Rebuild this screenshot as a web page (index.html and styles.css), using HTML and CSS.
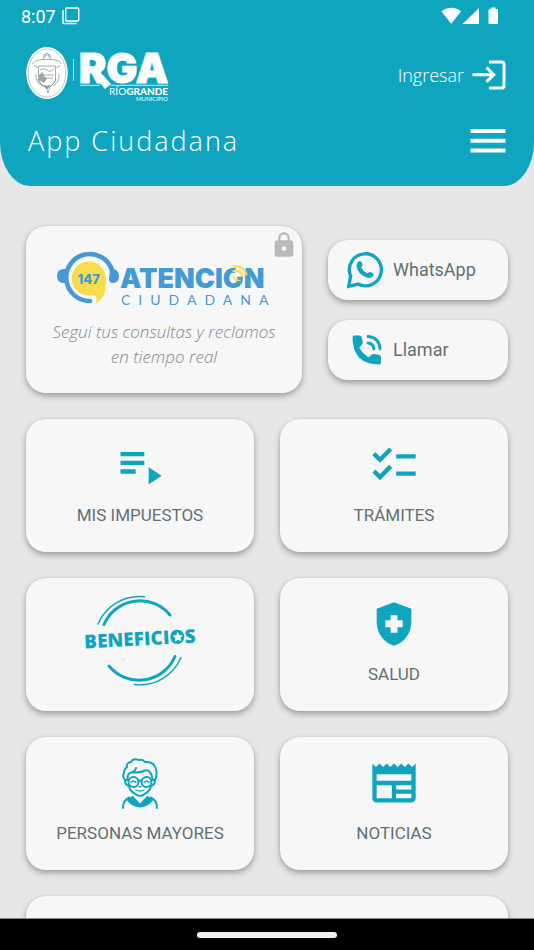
FILE: index.html
```
<!DOCTYPE html>
<html lang="es">
<head>
  <meta charset="UTF-8">
  <meta name="viewport" content="width=device-width, initial-scale=1.0">
  <title>App Ciudadana</title>
  <link rel="stylesheet" href="styles.css">
</head>
<body>

  <header class="header">
    <div class="status-bar">
      <span class="clock">8:07</span>
      <svg class="status-copy" width="18" height="18" viewBox="0 0 18 18" fill="none" stroke="currentColor" stroke-width="1.4">
        <rect x="3.7" y="1" width="13" height="13" rx="1"/>
        <path d="M1 3v12.5a1 1 0 0 0 1 1h12.5"/>
      </svg>
      <svg class="status-icons" width="58" height="18" viewBox="0 0 58 18" fill="currentColor">
        <path d="M0.500 4.500C6-.4 14.500-.4 20 4.500L10.200 16.800z"/>
        <path d="M38 1v16H21.500z"/>
        <path d="M50 .5h4.500V2H56a1 1 0 0 1 1 1v13a1 1 0 0 1-1 1h-7.500a1 1 0 0 1-1-1V3a1 1 0 0 1 1-1H50z"/>
      </svg>
    </div>

    <div class="brand-row">
      <svg class="logo" width="143" height="57" viewBox="0 0 143 57" role="img" aria-label="RGA Río Grande Municipio">
        <!-- escudo -->
        <ellipse cx="21" cy="27" rx="20.800" ry="26" fill="#fff"/>
        <ellipse cx="21" cy="27" rx="18.800" ry="24" fill="none" stroke="#9aa5a7" stroke-width=".6"/>
        <g fill="none" stroke="#7d8b8e" stroke-width=".7">
          <path d="M12.500 20h17v14q-1 5-8.500 7-7.500-2-8.500-7z"/>
          <path d="M6 18q3-4 9-4.500h12q6 .5 9 4.500M8 19q1 3 4 2M34 19q-1 3-4 2M17 13q0-5 4-6 4 1 4 6M19 12V9h4v3"/>
          <path d="M14 24q4-3 7 0t7-1M16 29h12M18 32h9M12 33q3 7 9 10 6-3 9-10M10 28q-1 8 6 12M33 28q1 8-6 12M20 41l2 6 2-6"/>
        </g>
        <path d="M13 29l3-3 2 4 3 3-3 4-5-3zM17 38l4 2 4-2-4 5z" fill="#6b7a7d" opacity=".65"/>
        <path d="M47.500 13v22" stroke="#fff" stroke-width=".8" opacity=".8"/>
        <!-- RGA -->
        <text class="logo-rga" x="53" y="36.500">RGA</text>
        <path d="M69 31l8-2 8 9-6 5z" fill="#fff"/>
        <path d="M54 39.300h20M84 39.300h58" stroke="#fff" stroke-width=".8"/>
        <text class="logo-rio" x="142" y="49" text-anchor="end">RÍO<tspan class="logo-grande">GRANDE</tspan></text>
        <text class="logo-municipio" x="142" y="54.500" text-anchor="end">MUNICIPIO</text>
      </svg>

      <a class="login" href="#ingresar">
        <span>Ingresar</span>
        <svg width="34" height="30" viewBox="0 0 34 30" fill="none" stroke="currentColor" stroke-width="3">
          <path d="M17 2h12.500a2.500 2.500 0 0 1 2.500 2.500v21a2.500 2.500 0 0 1-2.500 2.500H17"/>
          <path d="M.5 14.700H21M14.500 7.500l7.200 7.200-7.200 7.200"/>
        </svg>
      </a>
    </div>

    <div class="title-row">
      <h1>App Ciudadana</h1>
      <button class="menu-btn" type="button" aria-label="Menú">
        <svg width="36" height="26" viewBox="0 0 36 26" fill="currentColor">
          <path d="M.5 1h35v4H.5zM.5 10.800h35v4H.5zM.5 20.600h35v4H.5z"/>
        </svg>
      </button>
    </div>
  </header>

  <main class="content">
    <section class="top-row">
      <a class="card atencion" href="#atencion">
        <svg class="lock" width="28" height="28" viewBox="0 0 24 24" fill="#b9b9b9">
          <path d="M18 8h-1V6c0-2.760-2.240-5-5-5S7 3.240 7 6v2H6c-1.100 0-2 .9-2 2v10c0 1.100.9 2 2 2h12c1.100 0 2-.9 2-2V10c0-1.100-.9-2-2-2zm-6 9c-1.100 0-2-.9-2-2s.9-2 2-2 2 .9 2 2-.9 2-2 2zm3.100-9H8.900V6c0-1.710 1.390-3.100 3.100-3.100s3.100 1.390 3.100 3.100v2z"/>
        </svg>
        <svg class="atencion-logo" width="214" height="56" viewBox="0 0 214 56" role="img" aria-label="147 Atención Ciudadana">
          <path d="M55 19A23.500 23.500 0 1 0 33 50" fill="none" stroke="#459ad6" stroke-width="4.600" stroke-linecap="round"/>
          <path d="M9 18v14Q0 33 0 25t9-7zM53 17q9 1 9 8t-6 7q-4 0-4-4z" fill="#459ad6"/>
          <path d="M48.700 27.500A17 17 0 1 0 31.500 44.500L36 44.300Q41.500 45 38.800 52.500Q48.500 46.500 48.700 35z" fill="#f7dd4b"/>
          <text class="num" x="31.700" y="33" text-anchor="middle">147</text>
          <text class="atencion-word" x="63" y="36.600">ATENCION</text>
          <path d="M178 24l1-8h10l-2 9-5 1z" fill="#f7f7f7"/>
          <g fill="none" stroke="#f7dd4b" stroke-width="2.200" stroke-linecap="round">
            <path d="M176.500 15.500q10-1.500 13 8M176.500 20q7-1 9 5"/>
            <path d="M177 25q0 5 6 4.500" stroke-width="1.500"/>
          </g>
          <text class="ciudadana-word" x="64" y="54">CIUDADANA</text>
        </svg>
        <p>Seguí tus consultas y reclamos<br>en tiempo real</p>
      </a>

      <div class="contact">
        <a class="card contact-btn" href="#whatsapp">
          <svg width="40" height="40" viewBox="0 0 40 40" fill="none" stroke="currentColor">
            <path d="M5.600 26A16 16 0 1 1 13 34L3.800 36.300z" stroke-width="3.400"/>
            <path d="M13.500 11.500q1.500-1.500 3 .8l1 2.200q.6 1.200-1.300 3 2 4.200 6.300 6 1.700-2 3-1.400l2.600 1.500q1.300.8.2 2.400-2 2.500-5.200 1.900Q12.500 25 11.500 16q-.2-3 2-4.500z" fill="currentColor" stroke="none"/>
          </svg>
          <span>WhatsApp</span>
        </a>
        <a class="card contact-btn" href="#llamar">
          <svg width="40" height="40" viewBox="-2 0 40 40" fill="none" stroke="currentColor">
            <path d="M7.500 5.500h5q1.800 0 2.200 1.500l1 5q.3 1.500-.8 2.600l-2.700 3.200q3.500 6 9.200 9.700l3.200-2.700q1.100-1.100 2.600-.8l5 1q1.800.4 1.800 2v5.500q0 2-2 2Q19 34.500 12 27.500 5.500 20 5.500 7.500q0-2 2-2z" fill="currentColor" stroke="none"/>
            <path d="M21 6.500q11.500 1 12 12.500M21 13q5.500.5 6 6" stroke-width="2.800" stroke-linecap="round"/>
          </svg>
          <span>Llamar</span>
        </a>
      </div>
    </section>

    <nav class="grid">
      <a class="card tile" href="#impuestos">
        <svg width="52" height="52" viewBox="0 0 24 24" fill="currentColor">
          <path d="M3 10h11v2H3zM3 6h11v2H3zM3 14h7v2H3zM16 13v8l6-4z"/>
        </svg>
        <span>MIS IMPUESTOS</span>
      </a>

      <a class="card tile" href="#tramites">
        <svg width="52" height="52" viewBox="0 0 24 24" fill="currentColor">
          <path d="M22 7h-9v2h9V7zm0 8h-9v2h9v-2zM5.540 11 2 7.460l1.410-1.410 2.120 2.120 4.240-4.240 1.410 1.410L5.540 11zm0 8L2 15.460l1.410-1.410 2.120 2.120 4.240-4.240 1.410 1.410L5.540 19z"/>
        </svg>
        <span>TRÁMITES</span>
      </a>

      <a class="card tile tile-image" href="#beneficios">
        <svg width="114" height="92" viewBox="0 0 114 92" role="img" aria-label="Beneficios">
          <g fill="none" stroke="currentColor" stroke-linecap="round">
            <path d="M21 29.500A39 39 0 0 1 87 20M26 71A39 39 0 0 0 92 61.500" stroke-width="3"/>
            <path d="M15 29A45 45 0 0 1 61.500 1.700M51.500 89.500A44.500 44.500 0 0 0 98 62.500" stroke-width="1.500"/>
          </g>
          <g transform="rotate(-3 57 46)">
            <text class="beneficios-word" x="57" y="50.500" text-anchor="middle">BENEFICIOS</text>
            <circle cx="95" cy="43.800" r="6.500" fill="currentColor"/>
            <path d="M95 38.800l1.600 3.200 3.500.5-2.500 2.500.6 3.500-3.200-1.700-3.200 1.700.6-3.500-2.500-2.500 3.500-.5z" fill="#f7f7f7"/>
          </g>
          <path d="M38.500 64.300h3" stroke="currentColor" stroke-width=".8" opacity=".3"/>
        </svg>
      </a>

      <a class="card tile" href="#salud">
        <svg width="52" height="52" viewBox="0 0 24 24" fill="currentColor">
          <path d="M10.400 13.500H8v-3.200h2.400V8h3.200v2.300H16v3.200h-2.400V16h-3.200zM12 2 4 5v6.090c0 5.050 3.410 9.760 8 10.910 4.590-1.150 8-5.860 8-10.910V5z" fill-rule="evenodd"/>
        </svg>
        <span>SALUD</span>
      </a>

      <a class="card tile" href="#mayores">
        <svg width="52" height="52" viewBox="0 0 52 52" fill="none" stroke="currentColor" stroke-width="2" stroke-linecap="round" stroke-linejoin="round">
          <!-- pelo y cara -->
          <path d="M11 23q-3-3-1-7 0-4 3-6-1-4 4-5 2-4 8-2 4-1 6 2 6-.5 9 3 3 4 2.500 9 0 3-1.500 6"/>
          <path d="M13.500 22q0-6 3.500-6.500 4-.5 5-4.500M19 15.500q7 .5 12-2 5.500-1.500 7.500 8"/>
          <path d="M11 23q0 5 4 6 1 5 5 7 3 3 6 3t6-3q4-2 5-7 4-1 4-6"/>
          <!-- anteojos -->
          <circle cx="19.500" cy="25" r="5"/>
          <circle cx="32.500" cy="25" r="5"/>
          <path d="M24.500 24q1.500-1 3 0M12 23h2.500M37.500 23h2.500"/>
          <path d="M17 25.500q2.500-2.500 5 0M30 25.500q2.500-2.500 5 0M25 29.500q1 .8 2 0M22 33q4 2 8 0" stroke-width="1.300"/>
          <path d="M9 51q0-8 6.500-10.500M36.500 40.500Q43 43 43 51"/>
          <path d="M14 43l4.500-3 7.500 8 7.500-8 4.500 3q-4 6-12 6.500-8-.5-12-6.500z" fill="currentColor"/>
        </svg>
        <span>PERSONAS MAYORES</span>
      </a>

      <a class="card tile" href="#noticias">
        <svg width="52" height="52" viewBox="0 0 24 24" fill="currentColor">
          <path d="M20 11H4V8h16m0 7h-7v-2h7m0 6h-7v-2h7m-9 2H4v-6h7m9.330-8.330L18.670 3 17 4.670 15.330 3l-1.660 1.670L12 3l-1.670 1.670L8.670 3 7 4.670 5.330 3 3.670 4.670 2 3v16a2 2 0 0 0 2 2h16a2 2 0 0 0 2-2V3z"/>
        </svg>
        <span>NOTICIAS</span>
      </a>

      <div class="card tile tile-wide"></div>
    </nav>
  </main>

  <footer class="nav-bar">
    <div class="nav-pill"></div>
  </footer>

</body>
</html>
```
FILE: styles.css
```
* {
  box-sizing: border-box;
}

body {
  margin: 0;
  height: 100vh;
  display: flex;
  flex-direction: column;
  overflow: hidden;
  background-color: #e5e7e9;
  color: #5f7073;
  font-family: Roboto, sans-serif;
}

a {
  color: inherit;
  text-decoration: none;
}

svg {
  display: block;
  flex-shrink: 0;
  overflow: visible;
}

/* header */
.header {
  background-color: #0fa5bf;
  color: #fff;
  border-radius: 0 0 30px 30px / 0 0 44px 44px;
  padding-bottom: 25px;
}

.status-bar {
  display: flex;
  align-items: center;
  height: 32px;
  padding: 0 35px 0 21px;
}

.clock {
  font-size: 18px;
}

.status-copy {
  margin-left: 6px;
}

.status-icons {
  margin-left: auto;
}

.brand-row,
.title-row {
  display: flex;
  align-items: center;
  justify-content: space-between;
}

.brand-row {
  padding: 14px 28px 0 26px;
}

.login {
  display: flex;
  align-items: center;
  gap: 8px;
  font-family: "Open Sans", "Noto Sans", sans-serif;
  font-weight: 300;
  font-size: 18px;
}

.title-row {
  padding: 18px 28px 0 28px;
}

.title-row h1 {
  margin: 0;
  font-family: "Open Sans", "Noto Sans", sans-serif;
  font-weight: 300;
  font-size: 27px;
  line-height: 40px;
  letter-spacing: 2px;
}

.menu-btn {
  padding: 0;
  border: none;
  background: none;
  color: #fff;
  cursor: pointer;
}

.logo text {
  fill: #fff;
  font-family: Lato, sans-serif;
}

.logo .logo-rga {
  font-family: Inter, sans-serif;
  font-size: 41px;
  font-weight: 900;
  stroke: #fff;
  stroke-width: 1px;
}

.logo .logo-rio {
  font-size: 10px;
}

.logo .logo-grande {
  font-weight: 900;
}

.logo .logo-municipio {
  font-size: 6px;
}

/* cards */
.content {
  flex: 1;
  min-height: 0;
  overflow: hidden;
  padding: 40px 26px 0;
}

.card {
  background-color: #f7f7f7;
  border-radius: 20px;
  box-shadow: 0 3px 6px rgba(0, 0, 0, 0.32), 0 0 2px rgba(0, 0, 0, 0.08);
}

.top-row {
  display: grid;
  grid-template-columns: 23fr 15fr;
  gap: 26px;
  margin-bottom: 26px;
}

.atencion {
  position: relative;
  display: flex;
  flex-direction: column;
  align-items: center;
  padding: 25px 10px 24px;
}

.lock {
  position: absolute;
  top: 5px;
  right: 4px;
}

.atencion p {
  margin: 12px 0 0;
  text-align: center;
  font-family: "Open Sans", "Noto Sans", sans-serif;
  font-weight: 300;
  font-style: italic;
  font-size: 17px;
  line-height: 25px;
  color: #85888a;
}

.atencion-logo text {
  fill: #459ad6;
  font-family: Lato, sans-serif;
}

.atencion-logo .num {
  font-family: Inter, sans-serif;
  font-size: 13px;
  font-weight: 800;
}

.atencion-logo .atencion-word {
  font-family: Inter, sans-serif;
  font-size: 27px;
  font-weight: 900;
}

.atencion-logo .ciudadana-word {
  font-size: 14px;
  letter-spacing: 8px;
}

.contact {
  display: flex;
  flex-direction: column;
  justify-content: center;
  gap: 20px;
}

.contact-btn {
  display: flex;
  align-items: center;
  gap: 8px;
  padding: 10px 17px;
  font-size: 18px;
}

.contact-btn svg,
.tile svg {
  color: #0fa5bf;
}

.grid {
  display: grid;
  grid-template-columns: 1fr 1fr;
  gap: 26px;
}

.tile {
  display: flex;
  flex-direction: column;
  align-items: center;
  gap: 14px;
  height: 133px;
  padding-top: 20px;
  font-size: 17px;
  line-height: 20px;
}

.tile-image {
  padding-top: 17px;
}

.tile-wide {
  grid-column: 1 / -1;
}

.beneficios-word {
  fill: currentColor;
  font-family: "Open Sans", "Noto Sans", sans-serif;
  font-size: 19px;
  font-weight: 800;
}

/* system navigation */
.nav-bar {
  display: flex;
  align-items: center;
  justify-content: center;
  height: 32px;
  background-color: #000;
  border-top: 1px solid #8a8b8c;
}

.nav-pill {
  width: 140px;
  height: 6px;
  border-radius: 3px;
  background-color: #f1eff2;
}
```
